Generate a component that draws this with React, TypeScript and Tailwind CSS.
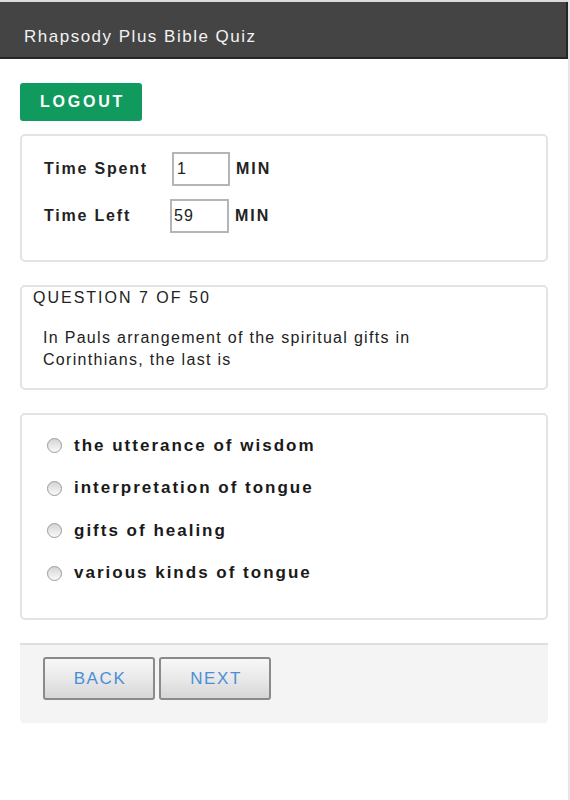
import { useState } from "react";

const OPTIONS = [
  "the utterance of wisdom",
  "interpretation of tongue",
  "gifts of healing",
  "various kinds of tongue",
];

export default function App() {
  const [choice, setChoice] = useState<number | null>(null);

  return (
    <div
      className="min-h-[800px] w-[570px] bg-white border-r-2 border-[#e6e6e6]"
      style={{ fontFamily: '"Liberation Sans", Arial, sans-serif' }}
    >
      <div className="pt-[2px] bg-[#dcdcdc] w-[568px]">
        <header className="flex h-[57px] items-center border-b-2 border-r-2 border-[#262626] bg-[#444444] pl-6 pt-[14px]">
          <h1 className="text-[17px] tracking-[1.5px] text-[#f2f2f2]">Rhapsody Plus Bible Quiz</h1>
        </header>
      </div>

      <div className="flex w-[528px] flex-col ml-5 pt-[24px]">
        <div>
          <button className="h-[38px] w-[122px] rounded-[3px] bg-[#109a5e] pl-[3px] text-[16px] font-bold tracking-[2.8px] text-white">
            LOGOUT
          </button>
        </div>

        <div className="mt-[13px] flex h-[128px] flex-col gap-[13px] rounded-[5px] border-2 border-[#e4e4e4] pl-[22px] pt-[16px]">
          <div className="flex items-center">
            <span className="w-[128px] text-[16px] font-bold tracking-[1.8px] text-[#222]">Time Spent</span>
            <input
              readOnly
              value="1"
              className="h-[34px] w-[58px] border-2 border-[#b5b5b5] px-[3px] text-[16px] tracking-[1px] text-[#222] outline-none"
            />
            <span className="ml-[6px] text-[16px] font-bold tracking-[2px] text-[#222]">MIN</span>
          </div>
          <div className="flex items-center">
            <span className="w-[126px] text-[16px] font-bold tracking-[1.8px] text-[#222]">Time Left</span>
            <input
              readOnly
              value="59"
              className="h-[34px] w-[59px] border-2 border-[#b5b5b5] px-[2px] text-[16px] tracking-[1px] text-[#222] outline-none"
            />
            <span className="ml-[6px] text-[16px] font-bold tracking-[2px] text-[#222]">MIN</span>
          </div>
        </div>

        <div className="mt-[23px] h-[105px] rounded-[5px] border-2 border-[#e4e4e4] pl-[11px]">
          <p className="pt-[1px] text-[16px] leading-[20px] tracking-[2px] text-[#222]">QUESTION 7 OF 50</p>
          <p className="mt-[19px] w-[440px] pl-[10px] text-[16px] leading-[22px] tracking-[1.3px] text-[#222]">
            In Pauls arrangement of the spiritual gifts in Corinthians, the last is
          </p>
        </div>

        <div className="mt-[23px] flex h-[207px] flex-col gap-[21.5px] rounded-[5px] border-2 border-[#e4e4e4] pl-[25px] pt-[20px]">
          {OPTIONS.map((opt, i) => (
            <label key={opt} className="flex h-[21px] cursor-pointer items-center gap-[12px]">
              <span className="flex h-[15px] w-[15px] items-center justify-center rounded-full border border-[#9a9a9a] bg-gradient-to-b from-[#d4d4d4] to-[#fafafa]">
                {choice === i && <span className="h-[6px] w-[6px] rounded-full bg-[#333]" />}
              </span>
              <input
                type="radio"
                name="answer"
                className="hidden"
                checked={choice === i}
                onChange={() => setChoice(i)}
              />
              <span className="text-[17px] font-bold tracking-[2px] text-[#1a1a1a]">{opt}</span>
            </label>
          ))}
        </div>

        <div className="mt-[23px] flex h-[80px] gap-1 rounded-b-[4px] border-t-2 border-[#dedede] bg-[#f4f4f4] pl-[23px] pt-[12px]">
          {["BACK", "NEXT"].map((b) => (
            <button
              key={b}
              className="h-[43px] w-[112px] rounded-[3px] border-2 border-[#8a8a8a] bg-gradient-to-b from-[#f7f7f7] via-[#e9e9e9] to-[#d6d6d6] pl-[2px] text-[17px] tracking-[1.6px] text-[#4a8fd6]"
            >
              {b}
            </button>
          ))}
        </div>
      </div>
    </div>
  );
}
